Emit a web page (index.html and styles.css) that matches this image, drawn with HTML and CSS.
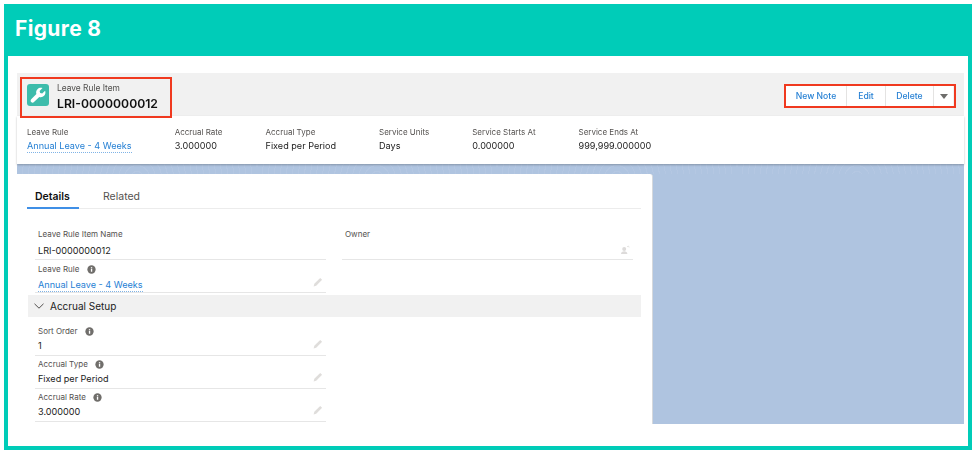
FILE: index.html
```html
<!DOCTYPE html>
<html lang="en">
<head>
<meta charset="utf-8">
<title>Figure 8</title>
<link rel="stylesheet" href="styles.css">
</head>
<body>
<svg class="defs" width="0" height="0" aria-hidden="true">
  <symbol id="info" viewBox="0 0 10 10"><circle cx="5" cy="5" r="4.6" fill="#706e6b"/><rect x="4.3" y="4.3" width="1.5" height="3.2" fill="#fff"/><rect x="4.3" y="2.4" width="1.5" height="1.3" fill="#fff"/></symbol>
  <symbol id="pencil" viewBox="0 0 10 10"><path d="M0.6 9.4l0.7-2.6L7.2 0.9l1.9 1.9-5.9 5.9z" fill="#dfdddb"/></symbol>
</svg>
<div class="frame">
  <header class="banner">Figure 8</header>
  <main class="sheet">
    <div class="shot">
      <div class="page-head">
        <div class="identity">
          <span class="obj-icon">
            <svg viewBox="0 0 22 22" width="22" height="22"><path d="M17.6 5.2l-2.9 2.9-2-.6-.6-2 2.9-2.9c-1.7-.6-3.7-.2-5 1.1-1.3 1.3-1.7 3.1-1.1 4.8l-5.2 5.3c-.8.8-.8 2 0 2.8.8.8 2 .8 2.8 0l5.3-5.2c1.7.6 3.5.2 4.8-1.1 1.3-1.3 1.7-3.4 1-5.100z" fill="#fff" transform="translate(0.5 1.5)"/></svg>
          </span>
          <div class="titles">
            <span class="obj-type">Leave Rule Item</span>
            <span class="obj-name">LRI-0000000012</span>
          </div>
        </div>
        <div class="actions">
          <button class="act act-note">New Note</button>
          <button class="act act-edit">Edit</button>
          <button class="act act-del">Delete</button>
          <button class="act act-more" aria-label="More"><span class="caret"></span></button>
        </div>
        <span class="mark mark-left"></span>
        <span class="mark mark-right"></span>
      </div>
      <div class="highlights">
        <div class="hl"><span class="hl-label">Leave Rule</span><a class="link hl-value">Annual Leave - 4 Weeks</a></div>
        <div class="hl"><span class="hl-label">Accrual Rate</span><span class="hl-value">3.000000</span></div>
        <div class="hl"><span class="hl-label">Accrual Type</span><span class="hl-value">Fixed per Period</span></div>
        <div class="hl"><span class="hl-label">Service Units</span><span class="hl-value">Days</span></div>
        <div class="hl"><span class="hl-label">Service Starts At</span><span class="hl-value">0.000000</span></div>
        <div class="hl"><span class="hl-label">Service Ends At</span><span class="hl-value">999,999.000000</span></div>
      </div>
      <div class="backdrop">
        <section class="card">
          <nav class="tabs">
            <span class="tab tab-active">Details</span>
            <span class="tab">Related</span>
          </nav>
          <div class="two-col">
            <div class="row row-first">
              <span class="label">Leave Rule Item Name</span>
              <span class="value">LRI-0000000012</span>
            </div>
            <div class="row row-first row-owner">
              <span class="label">Owner</span>
              <span class="value">&nbsp;</span>
              <svg class="edit owner-icon" viewBox="0 0 10 10"><circle cx="4.2" cy="4" r="2" fill="#dddbda"/><path d="M1 9c0-2 1.5-2.800 3.200-2.800S7.400 7 7.400 9z" fill="#dddbda"/><path d="M7 1.800l1.500-.8.600 1.500" fill="none" stroke="#dddbda" stroke-width=".7"/></svg>
            </div>
          </div>
          <div class="row row-gap">
            <span class="label">Leave Rule <svg class="info"><use href="#info"/></svg></span>
            <a class="link value">Annual Leave - 4 Weeks</a>
            <svg class="edit"><use href="#pencil"/></svg>
          </div>
          <div class="section-bar">
            <svg class="chev" viewBox="0 0 10 6" width="10" height="6"><path d="M0.500 0.800L5 5.200 9.500 0.800" fill="none" stroke="#514f4d" stroke-width="1"/></svg>
            <span>Accrual Setup</span>
          </div>
          <div class="row">
            <span class="label">Sort Order <svg class="info"><use href="#info"/></svg></span>
            <span class="value">1</span>
            <svg class="edit"><use href="#pencil"/></svg>
          </div>
          <div class="row">
            <span class="label">Accrual Type <svg class="info"><use href="#info"/></svg></span>
            <span class="value">Fixed per Period</span>
            <svg class="edit"><use href="#pencil"/></svg>
          </div>
          <div class="row">
            <span class="label">Accrual Rate <svg class="info"><use href="#info"/></svg></span>
            <span class="value">3.000000</span>
            <svg class="edit"><use href="#pencil"/></svg>
          </div>
        </section>
      </div>
    </div>
  </main>
</div>
</body>
</html>
```
FILE: styles.css
```css
* { box-sizing: border-box; }
html, body { margin: 0; padding: 0; background: #fff; }
body { width: 976px; height: 454px; overflow: hidden; padding: 4px; font-family: "Inter", "Liberation Sans", sans-serif; }
.defs { position: absolute; }
.frame { width: 968px; height: 446px; display: flex; flex-direction: column; }
.banner {
  height: 52px; flex: none; background: #00ccb8; color: #fff;
  font-family: "Inter", "Open Sans", sans-serif; font-weight: 700; font-size: 21px;
  letter-spacing: .35px;
  padding: 12px 0 0 11px; line-height: 25px;
}
.sheet {
  flex: 1; border: solid #00ccb8; border-width: 0 4px 4px; background: #fff;
  padding: 17px 0 0 9px; min-height: 0;
}
.shot { width: 947px; height: 351px; display: flex; flex-direction: column; color: #16325c; filter: blur(0.3px); }

.page-head {
  position: relative; height: 43px; flex: none; background: #f1f1f1;
  display: flex; align-items: flex-start; justify-content: space-between;
  padding: 11px 11px 0 10px;
}
.identity { display: flex; gap: 8px; }
.obj-icon { width: 22px; height: 22px; background: #3dbcab; border-radius: 3px; display: block; }
.obj-icon svg { display: block; }
.titles { display: flex; flex-direction: column; margin-top: -1px; }
.obj-type { font-size: 8.4px; line-height: 11px; color: #4f4e4c; }
.obj-name { font-size: 12.2px; line-height: 15px; font-weight: 600; color: #111; margin-top: 2px; }
.actions { display: flex; height: 20px; margin-top: 2px; background: #fff; }
.act {
  border: 0; border-right: 1px solid #e4e3e2; background: #fff; padding: 0; margin: 0;
  font: 500 8.6px/20px "Inter", "Liberation Sans", sans-serif; color: #2680d4;
  display: block; height: 20px;
}
.act-note { width: 61px; }
.act-edit { width: 39px; }
.act-del { width: 48px; }
.act-more { width: 19px; border-right: 0; position: relative; }
.caret {
  position: absolute; left: 6px; top: 8px; width: 0; height: 0;
  border: solid transparent; border-width: 5px 4px 0; border-top-color: #6e6d6b;
}
.mark { position: absolute; border: 2px solid #f0391f; pointer-events: none; }
.mark-left { left: 3px; top: 4px; width: 152px; height: 41px; z-index: 2; }
.mark-right { left: 767px; top: 11px; width: 172px; height: 24px; }

.highlights {
  height: 48px; flex: none; background: #fff; display: flex; gap: 43px;
  padding: 10px 0 0 10px; position: relative; z-index: 1;
  box-shadow: 0 1px 2px rgba(0,0,0,.25);
}
.hl { display: flex; flex-direction: column; }
.hl-label { font-size: 8px; line-height: 12px; color: #54514f; }
.hl-value { font-size: 9.1px; line-height: 14px; margin-top: 1px; color: #1b1b1b; }
.hl-value.link, .value.link { color: #2680d4; border-bottom: 1px dotted #7fb3e6; line-height: 12px; align-self: flex-start; }
.hl-value.link { margin-top: 2px; }

.backdrop {
  flex: 1; min-height: 0; padding-top: 10px; overflow: hidden;
  background-color: #afc4e0;
  background-image: repeating-radial-gradient(circle at 120px 14px, rgba(255,255,255,.06) 0 1px, transparent 1px 6px);
  background-size: 240px 10px;
  background-repeat: repeat-x;
}
.card {
  width: 636px; height: 250px; background: #fff; border-radius: 0 3px 0 0;
  border-right: 1px solid #d5d8dc;
  padding: 0 11px 0 10px; display: flex; flex-direction: column;
}
.tabs { display: flex; height: 35px; flex: none; border-bottom: 1px solid #ececec; }
.tab { font-size: 10.5px; line-height: 45px; height: 35px; color: #55524f; padding: 0 8px; width: 52px; margin-right: 16px; }
.tab-active { font-weight: 600; color: #111; border-bottom: 2px solid #3f8fe6; }

.two-col { display: flex; gap: 16px; padding-top: 17px; flex: none; }
.two-col .row { margin-left: 8px; }
.two-col .row + .row { margin-left: 0; }
.row {
  position: relative; width: 291px; height: 33px; margin-left: 8px; flex: none;
  border-bottom: 1px solid #e6e6e6; padding: 0 3px;
  display: flex; flex-direction: column;
}
.label { font-size: 8px; line-height: 12px; color: #54514f; margin-top: 2px; display: flex; align-items: center; gap: 5px; white-space: pre; }
.value { font-size: 9.1px; line-height: 14px; color: #1b1b1b; margin-top: 2px; }
.row-first { height: 34px; }
.row-first .value { margin-top: 4px; }
.edit { position: absolute; right: 3px; top: 16px; width: 10px; height: 10px; }
.info { width: 9px; height: 9px; display: block; }
.owner-icon { top: 19px; }
.row-gap { margin-bottom: 2px; }
.row-gap .label { margin-top: 3px; }
.row-gap .value.link { margin-top: 4px; }
.row-gap .edit { top: 17px; }
.section-bar {
  height: 22px; flex: none; background: #f1f1f1; margin: 0 0 6px 1px;
  display: flex; align-items: center; gap: 6px; padding-left: 6px;
  font-size: 10px; color: #1b1b1b;
}
```
